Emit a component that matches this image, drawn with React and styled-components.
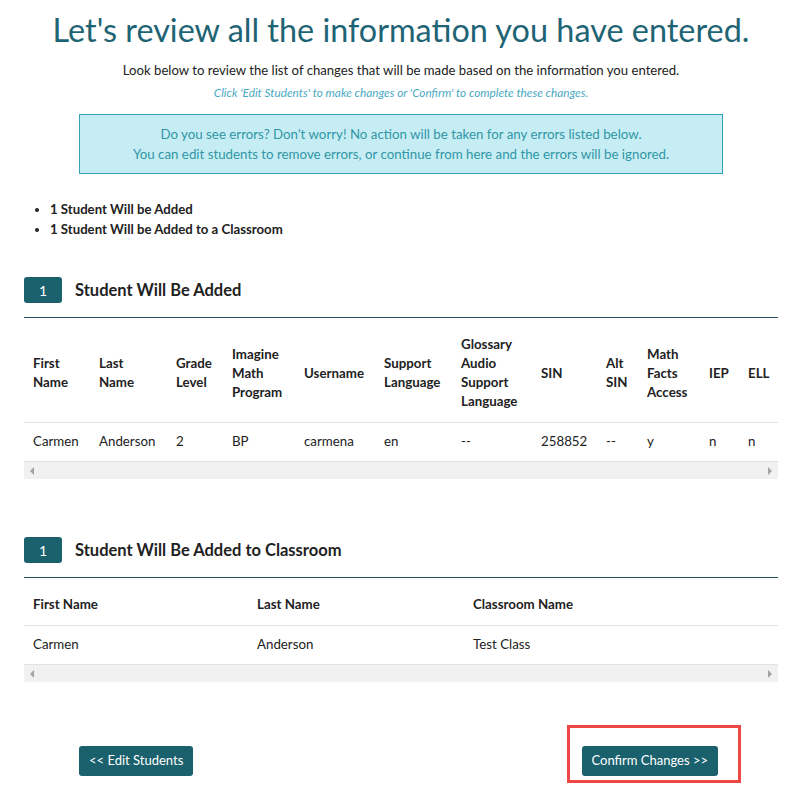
import React from "react";
import styled, { createGlobalStyle } from "styled-components";

const GlobalStyle = createGlobalStyle`
  body {
    margin: 0;
    background: #fff;
    font-family: Lato, "Open Sans", Arial, sans-serif;
    color: #222;
  }
`;

const Page = styled.div`
  width: 754px;
  margin-left: 24px;
  padding-top: 7px;
  padding-bottom: 15px;
`;

const Title = styled.h1`
  margin: 0;
  text-align: center;
  font-size: 32.4px;
  line-height: 45px;
  font-weight: 400;
  color: #1e6474;
  white-space: nowrap;
`;

const Lead = styled.p`
  margin: 8px 0 0;
  text-align: center;
  font-size: 13.15px;
  line-height: 20px;
  color: #222;
`;

const Hint = styled.p`
  margin: 5px 0 0;
  text-align: center;
  font-size: 11.8px;
  line-height: 16px;
  font-style: italic;
  color: #4aaac2;
`;

const Notice = styled.div`
  margin: 13px 55px 0;
  padding: 9px 10px;
  background: #c6edf3;
  border: 1px solid #33a3b4;
  text-align: center;
  font-size: 13.3px;
  line-height: 20px;
  color: #3196a6;
`;

const Summary = styled.ul`
  margin: 25px 0 0;
  padding-left: 26px;
  li {
    font-size: 13.2px;
    line-height: 20px;
    font-weight: 700;
    color: #222;
  }
`;

const Section = styled.section`
  margin-top: ${(p) => p.$top}px;
`;

const SectionHead = styled.div`
  display: flex;
  align-items: center;
  gap: 13px;
  padding-bottom: 14px;
  border-bottom: 1px solid #24535d;
`;

const Count = styled.span`
  display: inline-flex;
  align-items: center;
  justify-content: center;
  width: 38px;
  height: 26px;
  border-radius: 3px;
  background: #1a616d;
  color: #fff;
  font-size: 14px;
`;

const SectionTitle = styled.h2`
  margin: 0;
  font-size: 16.5px;
  font-weight: 700;
  color: #222;
`;

const TableWrap = styled.div`
  overflow: hidden;
`;

const Table = styled.table`
  width: 100%;
  table-layout: fixed;
  border-collapse: collapse;
  font-size: 13.3px;
  line-height: 19px;
  color: #222;
  th {
    text-align: left;
    font-weight: 700;
    vertical-align: middle;
    padding: 17px 4px 11px 9px;
    white-space: nowrap;
  }
  td {
    padding: 9px 4px 10px 9px;
    border-top: 1px solid #dfe2e6;
    white-space: nowrap;
  }
`;

const ScrollTrack = styled.div`
  display: flex;
  justify-content: space-between;
  align-items: center;
  height: 17px;
  padding: 0 6px;
  background: #f1f1f1;
  border-top: 1px solid #dfe2e6;
`;

const Arrow = styled.span`
  width: 0;
  height: 0;
  border-top: 4px solid transparent;
  border-bottom: 4px solid transparent;
  ${(p) =>
    p.$dir === "left"
      ? "border-right: 4px solid #a3a3a3;"
      : "border-left: 4px solid #a3a3a3;"}
`;

const Actions = styled.div`
  display: flex;
  justify-content: space-between;
  align-items: flex-end;
  margin-top: 43px;
  padding: 0 37px 0 55px;
`;

const Button = styled.button`
  height: 30px;
  padding: 0 10px 2px;
  margin-bottom: ${(p) => (p.$lift ? "7px" : "0")};
  border: none;
  border-radius: 3px;
  background: #1a616d;
  color: #fff;
  font-family: inherit;
  font-size: 13px;
  cursor: pointer;
`;

const Highlight = styled.div`
  padding: 18px 20px 4px 12px;
  border: 3px solid #ef4646;
`;

const studentCols = [
  { w: 66, label: ["First", "Name"], value: "Carmen" },
  { w: 77, label: ["Last", "Name"], value: "Anderson" },
  { w: 56, label: ["Grade", "Level"], value: "2" },
  { w: 72, label: ["Imagine", "Math", "Program"], value: "BP" },
  { w: 80, label: ["Username"], value: "carmena" },
  { w: 77, label: ["Support", "Language"], value: "en" },
  { w: 80, label: ["Glossary", "Audio", "Support", "Language"], value: "--" },
  { w: 65, label: ["SIN"], value: "258852" },
  { w: 41, label: ["Alt", "SIN"], value: "--" },
  { w: 62, label: ["Math", "Facts", "Access"], value: "y" },
  { w: 39, label: ["IEP"], value: "n" },
  { w: 39, label: ["ELL"], value: "n" },
];

const classCols = [
  { w: 224, label: ["First Name"], value: "Carmen" },
  { w: 216, label: ["Last Name"], value: "Anderson" },
  { w: 314, label: ["Classroom Name"], value: "Test Class" },
];

function ChangeTable({ cols }) {
  return (
    <>
      <TableWrap>
        <Table>
          <colgroup>
            {cols.map((c, i) => (
              <col key={i} style={{ width: c.w }} />
            ))}
          </colgroup>
          <thead>
            <tr>
              {cols.map((c, i) => (
                <th key={i}>
                  {c.label.map((line, j) => (
                    <div key={j}>{line}</div>
                  ))}
                </th>
              ))}
            </tr>
          </thead>
          <tbody>
            <tr>
              {cols.map((c, i) => (
                <td key={i}>{c.value}</td>
              ))}
            </tr>
          </tbody>
        </Table>
      </TableWrap>
      <ScrollTrack>
        <Arrow $dir="left" />
        <Arrow $dir="right" />
      </ScrollTrack>
    </>
  );
}

export default function App() {
  return (
    <>
      <GlobalStyle />
      <Page>
        <Title>Let's review all the information you have entered.</Title>
        <Lead>
          Look below to review the list of changes that will be made based on
          the information you entered.
        </Lead>
        <Hint>
          Click 'Edit Students' to make changes or 'Confirm' to complete these
          changes.
        </Hint>
        <Notice>
          Do you see errors? Don't worry! No action will be taken for any errors
          listed below.
          <br />
          You can edit students to remove errors, or continue from here and the
          errors will be ignored.
        </Notice>
        <Summary>
          <li>1 Student Will be Added</li>
          <li>1 Student Will be Added to a Classroom</li>
        </Summary>

        <Section $top={38}>
          <SectionHead>
            <Count>1</Count>
            <SectionTitle>Student Will Be Added</SectionTitle>
          </SectionHead>
          <ChangeTable cols={studentCols} />
        </Section>

        <Section $top={58}>
          <SectionHead>
            <Count>1</Count>
            <SectionTitle>Student Will Be Added to Classroom</SectionTitle>
          </SectionHead>
          <ChangeTable cols={classCols} />
        </Section>

        <Actions>
          <Button $lift>&lt;&lt; Edit Students</Button>
          <Highlight>
            <Button>Confirm Changes &gt;&gt;</Button>
          </Highlight>
        </Actions>
      </Page>
    </>
  );
}
